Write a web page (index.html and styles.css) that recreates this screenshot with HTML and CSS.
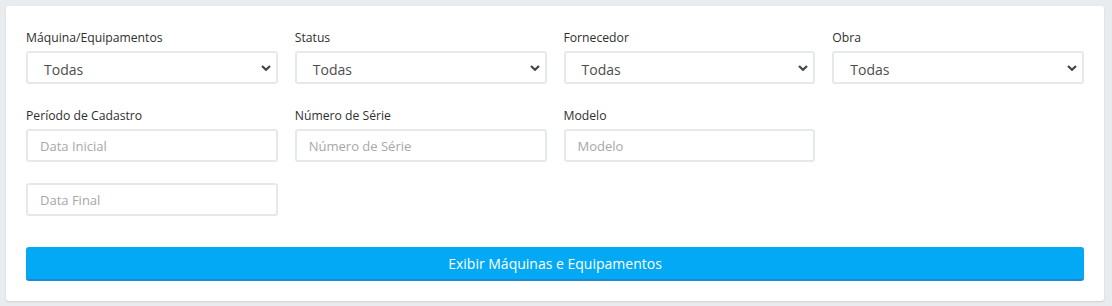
FILE: index.html
```html
<!DOCTYPE html>
<html lang="pt-BR">
<head>
<meta charset="utf-8">
<title>Filtro de Máquinas</title>
<link rel="stylesheet" href="styles.css">
</head>
<body>
<div class="card">
  <div class="grid">
    <div class="field">
      <label class="label">Máquina/Equipamentos</label>
      <div class="select"><span>Todas</span><svg class="chev" width="10" height="6" viewBox="0 0 10 6"><path d="M1 1 L5 4.8 L9 1" fill="none" stroke="#444" stroke-width="2.2"/></svg></div>
    </div>
    <div class="field">
      <label class="label">Status</label>
      <div class="select"><span>Todas</span><svg class="chev" width="10" height="6" viewBox="0 0 10 6"><path d="M1 1 L5 4.8 L9 1" fill="none" stroke="#444" stroke-width="2.2"/></svg></div>
    </div>
    <div class="field">
      <label class="label">Fornecedor</label>
      <div class="select"><span>Todas</span><svg class="chev" width="10" height="6" viewBox="0 0 10 6"><path d="M1 1 L5 4.8 L9 1" fill="none" stroke="#444" stroke-width="2.2"/></svg></div>
    </div>
    <div class="field">
      <label class="label">Obra</label>
      <div class="select"><span>Todas</span><svg class="chev" width="10" height="6" viewBox="0 0 10 6"><path d="M1 1 L5 4.8 L9 1" fill="none" stroke="#444" stroke-width="2.2"/></svg></div>
    </div>

    <div class="field">
      <label class="label">Período de Cadastro</label>
      <input class="input" type="text" placeholder="Data Inicial">
      <input class="input second" type="text" placeholder="Data Final">
    </div>
    <div class="field">
      <label class="label">Número de Série</label>
      <input class="input" type="text" placeholder="Número de Série">
    </div>
    <div class="field">
      <label class="label">Modelo</label>
      <input class="input" type="text" placeholder="Modelo">
    </div>
    <div class="field"></div>
  </div>
  <button class="btn" type="button">Exibir Máquinas e Equipamentos</button>
</div>
</body>
</html>
```

FILE: styles.css
```css
* { box-sizing: border-box; }
html, body { margin: 0; padding: 0; }
body {
  background: #e9ecef;
  font-family: "Open Sans", "Noto Sans", sans-serif;
  padding: 6px 8px 5px 6px;
}
.card {
  background: #fff;
  border-radius: 3px;
  box-shadow: 0 1px 2px rgba(0,0,0,0.12);
  padding: 23px 20px 20px;
  height: 295px;
  width: 1098px;
}
.grid {
  display: grid;
  grid-template-columns: repeat(4, 1fr);
  column-gap: 17px;
}
.field {
  display: flex;
  flex-direction: column;
  margin-bottom: 23px;
}
.label {
  display: block;
  font-size: 12.2px;
  line-height: 18px;
  color: #2f2f2f;
  margin-bottom: 4px;
}
.select {
  height: 33px;
  border: 2px solid #e6e9ec;
  border-radius: 3px;
  display: flex;
  align-items: center;
  justify-content: space-between;
  padding: 3px 5px 0 16px;
  font-size: 14px;
  color: #4d4d4d;
}
.chev { display: block; margin-top: -3px; }
.input {
  height: 33px;
  border: 2px solid #e6e9ec;
  border-radius: 3px;
  padding: 0 12px;
  font-family: inherit;
  font-size: 13px;
  color: #4d4d4d;
  outline: none;
  width: 100%;
}
.input::placeholder { color: #a5a8ab; }
.input.second { margin-top: 21px; }
.btn {
  display: block;
  width: 100%;
  height: 34px;
  margin-top: 8px;
  background: #03a9f4;
  border: none;
  border-bottom: 2px solid #1d8ad6;
  border-radius: 3px;
  color: #fff;
  font-family: inherit;
  font-size: 14px;
  padding: 0;
}
```
